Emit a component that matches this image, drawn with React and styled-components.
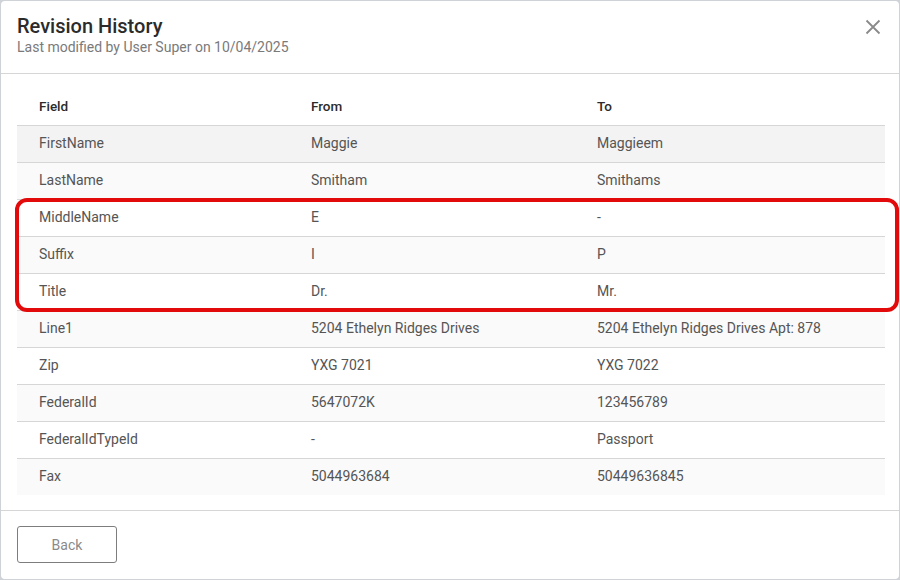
import React from "react";
import styled, { createGlobalStyle } from "styled-components";

const GlobalStyle = createGlobalStyle`
  html, body {
    margin: 0;
    padding: 0;
    background: #cfd3d8;
    font-family: Roboto, "Liberation Sans", Arial, sans-serif;
  }
  * {
    box-sizing: border-box;
  }
`;

const Page = styled.div`
  width: 900px;
  height: 580px;
  padding: 1px 1px 0 1px;
`;

const Modal = styled.div`
  width: 898px;
  height: 578px;
  background: #fff;
  border-radius: 4px;
  display: flex;
  flex-direction: column;
  overflow: hidden;
`;

const Header = styled.div`
  display: flex;
  justify-content: space-between;
  align-items: flex-start;
  padding: 13px 16px 17px 16px;
  height: 73px;
  border-bottom: 1px solid #d6d6d6;
`;

const TitleBlock = styled.div`
  display: flex;
  flex-direction: column;
`;

const Title = styled.h2`
  margin: 0;
  font-size: 20px;
  line-height: 24px;
  font-weight: 500;
  color: #2b2b2b;
`;

const Subtitle = styled.div`
  font-size: 14px;
  line-height: 18px;
  color: #7a7a7a;
`;

const CloseButton = styled.button`
  border: none;
  background: none;
  padding: 0;
  margin: 4px 1px 0 0;
  width: 18px;
  height: 18px;
  display: flex;
  align-items: center;
  justify-content: center;
  cursor: pointer;
`;

const Body = styled.div`
  height: 437px;
  padding: 14px 13px 0 16px;
  border-bottom: 1px solid #d6d6d6;
`;

const TableWrap = styled.div`
  position: relative;
`;

const Table = styled.table`
  width: 868px;
  border-collapse: collapse;
  table-layout: fixed;
`;

const HeadCell = styled.th`
  height: 37px;
  padding: 0 0 0 22px;
  text-align: left;
  font-size: 13.5px;
  font-weight: 500;
  color: #2b2b2b;
  border-bottom: 1px solid #d6d6d6;
`;

const Row = styled.tr`
  background: ${(p) => (p.$hover ? "#f3f3f3" : p.$striped ? "#fafafa" : "#fff")};
  border-bottom: ${(p) => (p.$last ? "none" : "1px solid #d6d6d6")};
`;

const Cell = styled.td`
  height: 37px;
  padding: 0 0 1px 22px;
  font-size: 14px;
  color: #555;
  white-space: nowrap;
`;

const Highlight = styled.div`
  position: absolute;
  left: -2px;
  top: 110px;
  width: 884px;
  height: 114px;
  border: 4px solid #e20a0a;
  border-radius: 12px;
  pointer-events: none;
`;

const Footer = styled.div`
  flex: 1;
  padding: 15px 16px;
  display: flex;
`;

const BackButton = styled.button`
  width: 100px;
  height: 37px;
  border: 1px solid #7d7d7d;
  border-radius: 3px;
  background: #fff;
  font-family: Roboto, "Liberation Sans", Arial, sans-serif;
  font-size: 14px;
  color: #8a8a8a;
  cursor: pointer;
`;

const rows = [
  ["FirstName", "Maggie", "Maggieem"],
  ["LastName", "Smitham", "Smithams"],
  ["MiddleName", "E", "-"],
  ["Suffix", "I", "P"],
  ["Title", "Dr.", "Mr."],
  ["Line1", "5204 Ethelyn Ridges Drives", "5204 Ethelyn Ridges Drives Apt: 878"],
  ["Zip", "YXG 7021", "YXG 7022"],
  ["FederalId", "5647072K", "123456789"],
  ["FederalIdTypeId", "-", "Passport"],
  ["Fax", "5044963684", "50449636845"],
];

const App = () => {
  return (
    <Page>
      <GlobalStyle />
      <Modal>
        <Header>
          <TitleBlock>
            <Title>Revision History</Title>
            <Subtitle>Last modified by User Super on 10/04/2025</Subtitle>
          </TitleBlock>
          <CloseButton aria-label="Close">
            <svg width="16" height="16" viewBox="0 0 16 16">
              <path d="M1.5 1.5 L14.5 14.5 M14.5 1.5 L1.5 14.5" stroke="#8a8a8a" strokeWidth="1.8" />
            </svg>
          </CloseButton>
        </Header>

        <Body>
          <TableWrap>
            <Table>
              <colgroup>
                <col style={{ width: 272 }} />
                <col style={{ width: 286 }} />
                <col style={{ width: 310 }} />
              </colgroup>
              <thead>
                <tr>
                  <HeadCell>Field</HeadCell>
                  <HeadCell>From</HeadCell>
                  <HeadCell>To</HeadCell>
                </tr>
              </thead>
              <tbody>
                {rows.map((r, i) => (
                  <Row
                    key={r[0]}
                    $hover={i === 0}
                    $striped={i % 2 === 1}
                    $last={i === rows.length - 1}
                  >
                    <Cell>{r[0]}</Cell>
                    <Cell>{r[1]}</Cell>
                    <Cell>{r[2]}</Cell>
                  </Row>
                ))}
              </tbody>
            </Table>
            {/* annotation over MiddleName / Suffix / Title */}
            <Highlight />
          </TableWrap>
        </Body>

        <Footer>
          <BackButton>Back</BackButton>
        </Footer>
      </Modal>
    </Page>
  );
};

export default App;
